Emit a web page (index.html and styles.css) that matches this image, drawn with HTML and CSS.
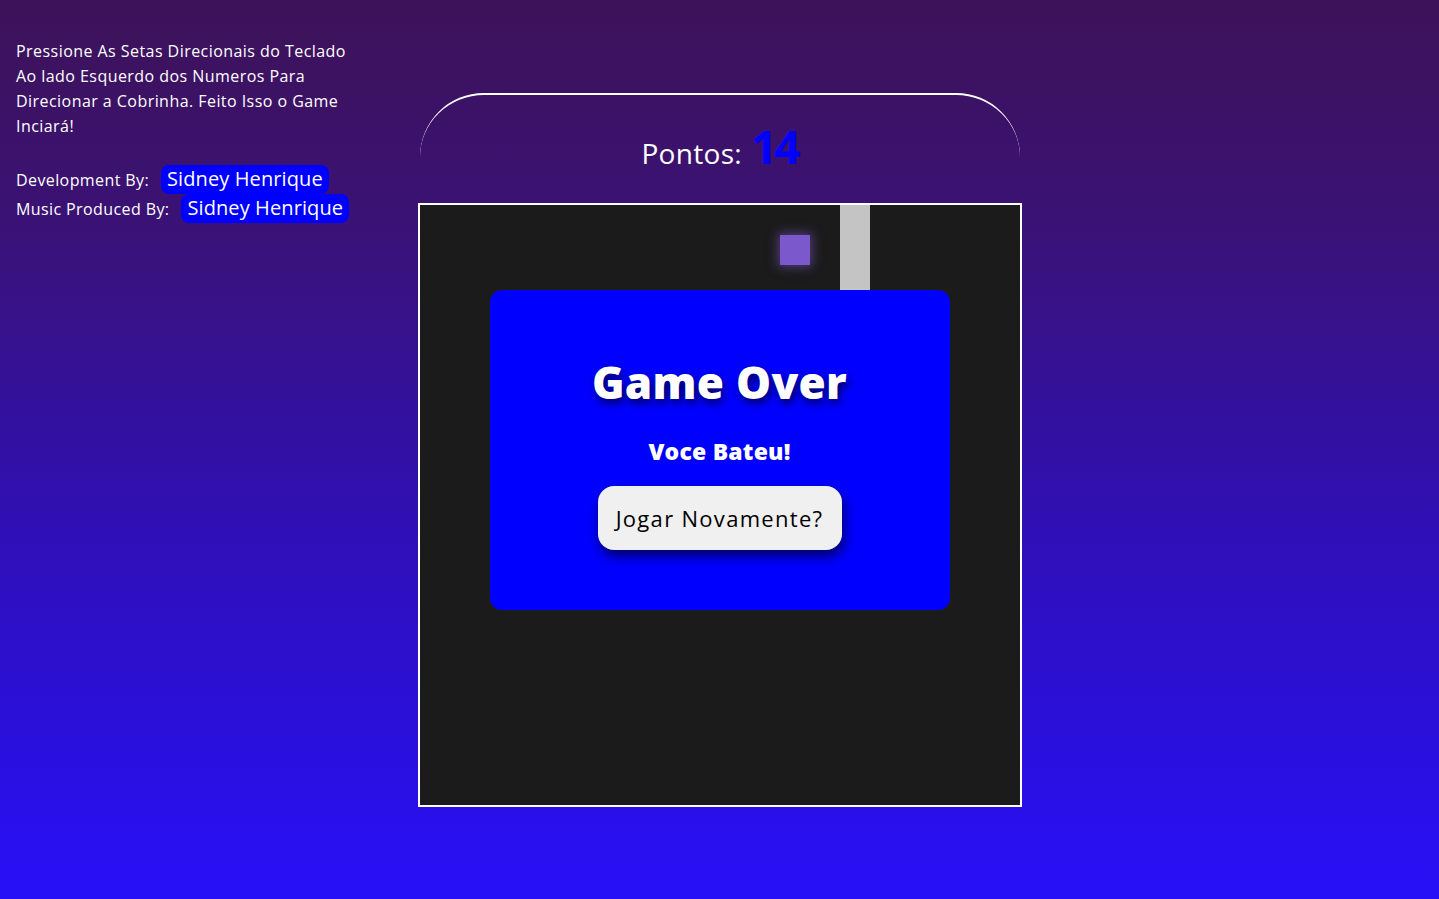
FILE: index.html
```html
<!DOCTYPE html>
<html lang="pt">
<head>
<meta charset="utf-8">
<title>Snake</title>
<link rel="stylesheet" href="styles.css">
</head>
<body>
<div class="page">
  <aside class="info">
    <p class="instructions">Pressione As Setas Direcionais do Teclado Ao lado Esquerdo dos Numeros Para Direcionar a Cobrinha. Feito Isso o Game Inciará!</p>
    <div class="credit"><span class="label">Development By:</span><span class="chip">Sidney Henrique</span></div>
    <div class="credit"><span class="label">Music Produced By:</span><span class="chip">Sidney Henrique</span></div>
  </aside>
  <main class="game">
    <header class="score">
      <span class="score-label">Pontos:</span><span class="score-value">14</span>
    </header>
    <div class="board">
      <div class="grid">
        <div class="food"></div>
        <div class="snake"></div>
      </div>
      <div class="overlay">
        <h1 class="over-title">Game Over</h1>
        <p class="over-sub">Voce Bateu!</p>
        <button class="again">Jogar Novamente?</button>
      </div>
    </div>
  </main>
  <div class="spacer"></div>
</div>
</body>
</html>
```

FILE: styles.css
```css
* { box-sizing: border-box; }
html, body { margin: 0; height: 100%; }
body {
  font-family: "Open Sans", "Liberation Sans", sans-serif;
  color: #fff;
  background: linear-gradient(180deg, #3e1258 0%, #3a1276 25%, #2f10b8 60%, #2710f8 100%);
  min-height: 899px;
}
.page {
  display: grid;
  grid-template-columns: 1fr auto 1fr;
  min-height: 899px;
}
.info {
  padding: 39px 0 0 16px;
}
.instructions {
  margin: 0 0 26px;
  max-width: 345px;
  font-size: 16px;
  line-height: 25px;
  font-weight: 500;
  letter-spacing: 0.45px;
}
.credit {
  display: flex;
  align-items: center;
  height: 29px;
  font-size: 16px;
  letter-spacing: 0.4px;
}
.label { margin-right: 12px; }
.chip {
  background: #0000ff;
  border-radius: 8px;
  padding: 1px 6px 2px;
  font-size: 20px;
  line-height: 26px;
  letter-spacing: 0.1px;
}
.game {
  padding-top: 93px;
  display: flex;
  flex-direction: column;
  align-items: center;
}
.score {
  width: 600px;
  height: 110px;
  border-top: 2px solid #fff;
  border-radius: 64px 64px 0 0;
  display: flex;
  justify-content: center;
  align-items: baseline;
  padding-top: 28px;
}
.score-label {
  font-size: 28px;
  margin-right: 9px;
  letter-spacing: 0.3px;
}
.score-value {
  font-size: 46px;
  font-weight: 700;
  color: #0000ff;
  letter-spacing: -3px;
  line-height: 46px;
}
.board {
  position: relative;
  width: 604px;
  height: 604px;
  border: 2px solid #fff;
  background: #1b1b1b;
}
.grid {
  position: relative;
  width: 600px;
  height: 600px;
}
.food {
  position: absolute;
  left: 360px;
  top: 30px;
  width: 30px;
  height: 30px;
  background: #7b58cc;
  box-shadow: 0 0 10px 2px rgba(123, 88, 204, 0.55);
}
.snake {
  position: absolute;
  left: 420px;
  top: 0;
  width: 30px;
  height: 90px;
  background: #c4c4c4;
}
.overlay {
  position: absolute;
  left: 70px;
  top: 85px;
  width: 460px;
  height: 320px;
  background: #0000ff;
  border-radius: 12px;
  display: flex;
  flex-direction: column;
  align-items: center;
  padding-top: 62px;
}
.over-title {
  margin: 0;
  font-size: 44px;
  font-weight: 800;
  line-height: 60px;
  letter-spacing: 0.3px;
  text-shadow: 2px 4px 8px rgba(0, 0, 60, 0.85);
}
.over-sub {
  margin: 23px 0 19px;
  font-size: 23px;
  font-weight: 800;
  line-height: 32px;
  letter-spacing: 0.2px;
}
.again {
  width: 244px;
  height: 64px;
  border: none;
  border-radius: 16px;
  background: #f0f0f0;
  color: #000;
  font-family: inherit;
  font-size: 22px;
  letter-spacing: 1.3px;
  box-shadow: 2px 6px 12px rgba(0, 0, 60, 0.8);
}
```
